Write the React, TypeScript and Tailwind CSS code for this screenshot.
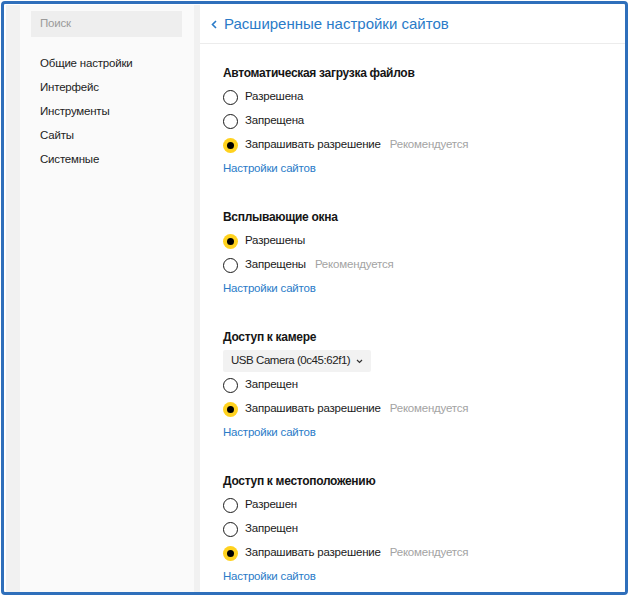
import React, { useState } from 'react';

type Option = { label: string; note?: string };

interface SectionProps {
  title: string;
  options: Option[];
  selected: number;
  select?: string;
}

function Radio({ checked }: { checked: boolean }) {
  if (checked) {
    return (
      <span className="flex h-[15px] w-[15px] items-center justify-center rounded-full bg-[#ffd21f]">
        <span className="h-[7px] w-[7px] rounded-full bg-black" />
      </span>
    );
  }
  return <span className="h-[15px] w-[15px] rounded-full border-[1.5px] border-[#1a1a1a] bg-white" />;
}

function Section({ title, options, selected, select }: SectionProps) {
  const [value, setValue] = useState(selected);

  return (
    <div className="flex flex-col">
      <div className="flex h-6 items-center text-[12px] font-bold tracking-[-0.3px] text-[#151515]">{title}</div>
      {select && (
        <div className="flex h-6 items-center">
          <div className="flex h-[22px] items-center gap-[6px] rounded-[2px] bg-[#f2f2f2] pl-2 pr-[8px] tracking-[-0.45px] text-[#222]">
            {select}
            <svg width="7" height="5" viewBox="0 0 7 5" className="mt-[1px]">
              <path d="M1 1l2.5 2.5L6 1" fill="none" stroke="#333" strokeWidth="1.2" />
            </svg>
          </div>
        </div>
      )}
      {options.map((opt, i) => (
        <button
          key={opt.label}
          onClick={() => setValue(i)}
          className="flex h-6 items-center gap-[7px] text-left text-[#1a1a1a]"
        >
          <Radio checked={value === i} />
          <span>{opt.label}</span>
          {opt.note && <span className="ml-[2px] text-[#a3a3a3]">{opt.note}</span>}
        </button>
      ))}
      <a href="#" className="flex h-6 items-center text-[#2a7bc8]">
        Настройки сайтов
      </a>
    </div>
  );
}

const menu = ['Общие настройки', 'Интерфейс', 'Инструменты', 'Сайты', 'Системные'];

export default function App() {
  return (
    <div
      className="h-[598px] w-[630px] bg-white pb-[3px] pl-[1px] pr-[2px] pt-[1px] text-[11.5px] tracking-[-0.2px]"
      style={{ fontFamily: '"Liberation Sans", Arial, sans-serif' }}
    >
      <div className="flex h-full overflow-hidden rounded-[4px] border-[3px] border-[#2f6fbb] bg-white pl-[2px] pt-[1px]">
        {/* Sidebar */}
        <div className="flex w-[194px] shrink-0 bg-[#f1f1f1] pl-[14px] pr-[6px]">
          <div className="flex flex-1 flex-col bg-[#fafafa] pl-[11px] pr-[12px] pt-[6px]">
            <div className="flex h-[26px] items-center bg-[#eeeeee] px-[9px] text-[#9a9a9a]">Поиск</div>
            <nav className="mt-[15px] flex flex-col pl-[9px]">
              {menu.map((item) => (
                <a key={item} href="#" className="flex h-6 items-center text-[#222]">
                  {item}
                </a>
              ))}
            </nav>
          </div>
        </div>

        {/* Main */}
        <div className="flex flex-1 flex-col bg-white">
          <div className="flex h-[39px] shrink-0 items-center gap-[7px] border-b border-[#ececec] pl-[11px]">
            <svg width="6" height="9" viewBox="0 0 6 9">
              <path d="M5 1L1.5 4.5 5 8" fill="none" stroke="#2a7bc8" strokeWidth="1.6" />
            </svg>
            <span className="text-[15px] tracking-normal text-[#2a7bc8]">Расширенные настройки сайтов</span>
          </div>
          <div className="flex flex-col gap-6 pl-[23px] pt-[17px]">
            <Section
              title="Автоматическая загрузка файлов"
              selected={2}
              options={[
                { label: 'Разрешена' },
                { label: 'Запрещена' },
                { label: 'Запрашивать разрешение', note: 'Рекомендуется' },
              ]}
            />
            <Section
              title="Всплывающие окна"
              selected={0}
              options={[{ label: 'Разрешены' }, { label: 'Запрещены', note: 'Рекомендуется' }]}
            />
            <Section
              title="Доступ к камере"
              select="USB Camera (0c45:62f1)"
              selected={1}
              options={[{ label: 'Запрещен' }, { label: 'Запрашивать разрешение', note: 'Рекомендуется' }]}
            />
            <Section
              title="Доступ к местоположению"
              selected={2}
              options={[
                { label: 'Разрешен' },
                { label: 'Запрещен' },
                { label: 'Запрашивать разрешение', note: 'Рекомендуется' },
              ]}
            />
          </div>
        </div>
      </div>
    </div>
  );
}
